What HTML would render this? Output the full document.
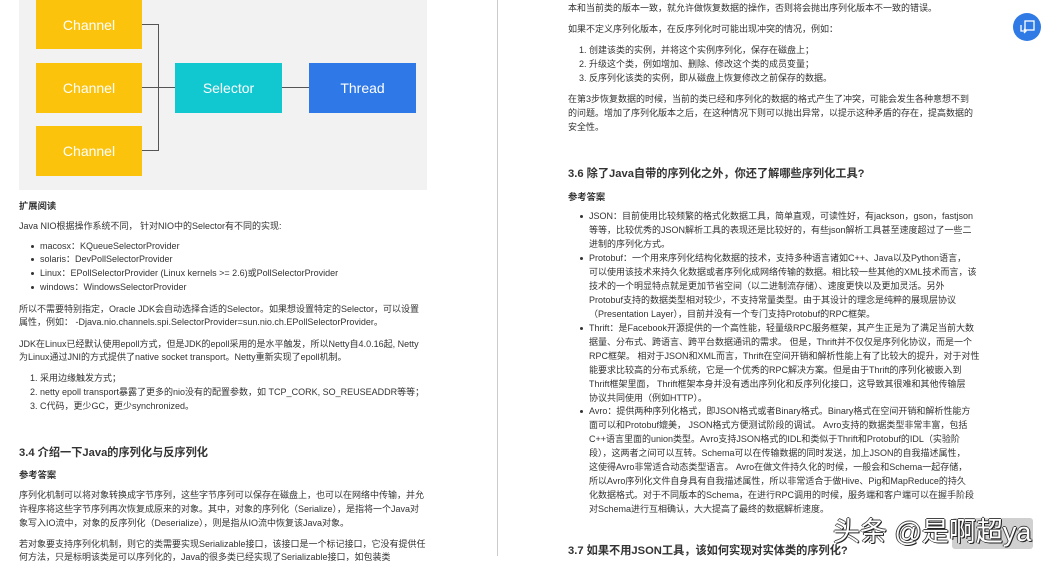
<!DOCTYPE html>
<html><head><meta charset="utf-8"><style>
*{margin:0;padding:0}
body{width:1046px;height:556px;background:#fff;position:relative;overflow:hidden;font-family:"Liberation Sans","Noto Sans CJK SC",sans-serif;color:#333}
.t{position:absolute;white-space:nowrap;font-size:9px;line-height:12px}
.h{position:absolute;white-space:nowrap;font-size:11.2px;font-weight:bold;color:#333}
.b{position:absolute;white-space:nowrap;font-size:9.3px;font-weight:bold;color:#333}
.box{position:absolute;color:#fff;font-size:14px;display:flex;align-items:center;justify-content:center}
.ln{position:absolute;background:#555}
.dot{position:absolute;width:3px;height:3px;background:#333;border-radius:50%}
</style></head><body>
<div style="position:absolute;left:19px;top:0;width:408px;height:190px;background:#f2f2f2"></div>
<div class="box" style="left:36px;top:0;width:106px;height:49px;background:#fbc30c">Channel</div>
<div class="box" style="left:36px;top:63px;width:106px;height:50px;background:#fbc30c">Channel</div>
<div class="box" style="left:36px;top:126px;width:106px;height:50px;background:#fbc30c">Channel</div>
<div class="box" style="left:175px;top:63px;width:107px;height:50px;background:#12c8d0">Selector</div>
<div class="box" style="left:309px;top:63px;width:107px;height:50px;background:#2f78e8">Thread</div>
<div class="ln" style="left:158px;top:24px;width:1px;height:127px"></div>
<div class="ln" style="left:142px;top:24px;width:16px;height:1px"></div>
<div class="ln" style="left:142px;top:87px;width:33px;height:1px"></div>
<div class="ln" style="left:142px;top:150px;width:16px;height:1px"></div>
<div class="ln" style="left:282px;top:87px;width:27px;height:1px"></div>
<div style="position:absolute;left:497px;top:0;width:1px;height:556px;background:#ccc"></div>

<div class="b" style="left:19px;top:198px">扩展阅读</div>
<div class="t" style="left:19px;top:220px">Java NIO根据操作系统不同， 针对NIO中的Selector有不同的实现:</div>
<div class="dot" style="left:31px;top:245px"></div><div class="t" style="left:40px;top:240px">macosx：KQueueSelectorProvider</div>
<div class="dot" style="left:31px;top:258px"></div><div class="t" style="left:40px;top:253px">solaris：DevPollSelectorProvider</div>
<div class="dot" style="left:31px;top:272px"></div><div class="t" style="left:40px;top:267px">Linux：EPollSelectorProvider (Linux kernels >= 2.6)或PollSelectorProvider</div>
<div class="dot" style="left:31px;top:286px"></div><div class="t" style="left:40px;top:281px">windows：WindowsSelectorProvider</div>
<div class="t" style="left:19px;top:303px">所以不需要特别指定，Oracle JDK会自动选择合适的Selector。如果想设置特定的Selector，可以设置</div>
<div class="t" style="left:19px;top:316px">属性，例如： -Djava.nio.channels.spi.SelectorProvider=sun.nio.ch.EPollSelectorProvider。</div>
<div class="t" style="left:19px;top:338px">JDK在Linux已经默认使用epoll方式，但是JDK的epoll采用的是水平触发，所以Netty自4.0.16起, Netty</div>
<div class="t" style="left:19px;top:351px">为Linux通过JNI的方式提供了native socket transport。Netty重新实现了epoll机制。</div>
<div class="t" style="left:30px;top:372px">1. 采用边缘触发方式；</div>
<div class="t" style="left:30px;top:386px">2. netty epoll transport暴露了更多的nio没有的配置参数，如 TCP_CORK, SO_REUSEADDR等等；</div>
<div class="t" style="left:30px;top:400px">3. C代码，更少GC，更少synchronized。</div>
<div class="h" style="left:19px;top:444px">3.4 介绍一下Java的序列化与反序列化</div>
<div class="b" style="left:19px;top:467px">参考答案</div>
<div class="t" style="left:19px;top:489px">序列化机制可以将对象转换成字节序列，这些字节序列可以保存在磁盘上，也可以在网络中传输，并允</div>
<div class="t" style="left:19px;top:503px">许程序将这些字节序列再次恢复成原来的对象。其中，对象的序列化（Serialize），是指将一个Java对</div>
<div class="t" style="left:19px;top:517px">象写入IO流中，对象的反序列化（Deserialize），则是指从IO流中恢复该Java对象。</div>
<div class="t" style="left:19px;top:538px">若对象要支持序列化机制，则它的类需要实现Serializable接口，该接口是一个标记接口，它没有提供任</div>
<div class="t" style="left:19px;top:551px">何方法，只是标明该类是可以序列化的，Java的很多类已经实现了Serializable接口，如包装类</div>

<div class="t" style="left:568px;top:2px">本和当前类的版本一致，就允许做恢复数据的操作，否则将会抛出序列化版本不一致的错误。</div>
<div class="t" style="left:568px;top:23px">如果不定义序列化版本，在反序列化时可能出现冲突的情况，例如：</div>
<div class="t" style="left:579px;top:44px">1. 创建该类的实例，并将这个实例序列化，保存在磁盘上；</div>
<div class="t" style="left:579px;top:58px">2. 升级这个类，例如增加、删除、修改这个类的成员变量；</div>
<div class="t" style="left:579px;top:72px">3. 反序列化该类的实例，即从磁盘上恢复修改之前保存的数据。</div>
<div class="t" style="left:568px;top:93px">在第3步恢复数据的时候，当前的类已经和序列化的数据的格式产生了冲突，可能会发生各种意想不到</div>
<div class="t" style="left:568px;top:107px">的问题。增加了序列化版本之后，在这种情况下则可以抛出异常，以提示这种矛盾的存在，提高数据的</div>
<div class="t" style="left:568px;top:121px">安全性。</div>
<div class="h" style="left:568px;top:165px">3.6 除了Java自带的序列化之外，你还了解哪些序列化工具?</div>
<div class="b" style="left:568px;top:189px">参考答案</div>
<div class="dot" style="left:580px;top:215px"></div><div class="t" style="left:589px;top:210px">JSON：目前使用比较频繁的格式化数据工具，简单直观，可读性好，有jackson，gson，fastjson</div>
<div class="t" style="left:589px;top:224px">等等，比较优秀的JSON解析工具的表现还是比较好的，有些json解析工具甚至速度超过了一些二</div>
<div class="t" style="left:589px;top:238px">进制的序列化方式。</div>
<div class="dot" style="left:580px;top:257px"></div><div class="t" style="left:589px;top:252px">Protobuf：一个用来序列化结构化数据的技术，支持多种语言诸如C++、Java以及Python语言，</div>
<div class="t" style="left:589px;top:266px">可以使用该技术来持久化数据或者序列化成网络传输的数据。相比较一些其他的XML技术而言，该</div>
<div class="t" style="left:589px;top:280px">技术的一个明显特点就是更加节省空间（以二进制流存储）、速度更快以及更加灵活。另外</div>
<div class="t" style="left:589px;top:294px">Protobuf支持的数据类型相对较少，不支持常量类型。由于其设计的理念是纯粹的展现层协议</div>
<div class="t" style="left:589px;top:308px">（Presentation Layer），目前并没有一个专门支持Protobuf的RPC框架。</div>
<div class="dot" style="left:580px;top:327px"></div><div class="t" style="left:589px;top:322px">Thrift：是Facebook开源提供的一个高性能，轻量级RPC服务框架，其产生正是为了满足当前大数</div>
<div class="t" style="left:589px;top:336px">据量、分布式、跨语言、跨平台数据通讯的需求。 但是，Thrift并不仅仅是序列化协议，而是一个</div>
<div class="t" style="left:589px;top:350px">RPC框架。 相对于JSON和XML而言，Thrift在空间开销和解析性能上有了比较大的提升，对于对性</div>
<div class="t" style="left:589px;top:364px">能要求比较高的分布式系统，它是一个优秀的RPC解决方案。但是由于Thrift的序列化被嵌入到</div>
<div class="t" style="left:589px;top:378px">Thrift框架里面， Thrift框架本身并没有透出序列化和反序列化接口，这导致其很难和其他传输层</div>
<div class="t" style="left:589px;top:392px">协议共同使用（例如HTTP）。</div>
<div class="dot" style="left:580px;top:410px"></div><div class="t" style="left:589px;top:405px">Avro：提供两种序列化格式，即JSON格式或者Binary格式。Binary格式在空间开销和解析性能方</div>
<div class="t" style="left:589px;top:419px">面可以和Protobuf媲美， JSON格式方便测试阶段的调试。 Avro支持的数据类型非常丰富，包括</div>
<div class="t" style="left:589px;top:433px">C++语言里面的union类型。Avro支持JSON格式的IDL和类似于Thrift和Protobuf的IDL（实验阶</div>
<div class="t" style="left:589px;top:447px">段），这两者之间可以互转。Schema可以在传输数据的同时发送，加上JSON的自我描述属性，</div>
<div class="t" style="left:589px;top:461px">这使得Avro非常适合动态类型语言。 Avro在做文件持久化的时候，一般会和Schema一起存储，</div>
<div class="t" style="left:589px;top:475px">所以Avro序列化文件自身具有自我描述属性，所以非常适合于做Hive、Pig和MapReduce的持久</div>
<div class="t" style="left:589px;top:489px">化数据格式。对于不同版本的Schema，在进行RPC调用的时候，服务端和客户端可以在握手阶段</div>
<div class="t" style="left:589px;top:503px">对Schema进行互相确认，大大提高了最终的数据解析速度。</div>
<div class="h" style="left:568px;top:542px">3.7 如果不用JSON工具，该如何实现对实体类的序列化?</div>

<div style="position:absolute;left:952px;top:518px;width:81px;height:31px;background:rgba(200,200,200,.85);border-radius:3px"></div>
<div style="position:absolute;left:833px;top:510px;white-space:nowrap;font-size:27px;color:#fff;text-shadow:1px 1px 0 #222,-1px 0 0 #444,0 -1px 0 #444,1px 0 0 #444;font-family:'Liberation Sans','Noto Sans CJK SC',sans-serif">头条 @是啊超ya</div>

<div style="position:absolute;left:1013px;top:13px;width:28px;height:28px;border-radius:50%;background:#2f7ae5"></div>
<svg style="position:absolute;left:1013px;top:13px" width="28" height="28" viewBox="0 0 28 28"><rect x="12" y="8" width="9" height="9" fill="none" stroke="#fff" stroke-width="1.3"/><path d="M8 12v6h5M11 16l2 2-2 2" fill="none" stroke="#fff" stroke-width="1.3"/></svg>
</body></html>
